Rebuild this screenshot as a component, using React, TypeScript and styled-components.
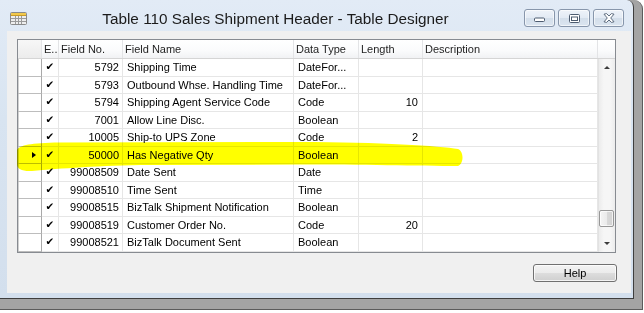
import React from "react";
import styled, { createGlobalStyle } from "styled-components";

const Global = createGlobalStyle`
  html, body { margin: 0; padding: 0; background: #ffffff; }
  body { font-family: "Liberation Sans", Arial, sans-serif; }
  * { box-sizing: border-box; }
`;

const Screen = styled.div`
  position: relative;
  width: 644px;
  height: 313px;
  overflow: hidden;
  background: #ffffff;
`;

const Shadow = styled.div`
  width: 643px;
  height: 310px;
  background: #a4a4a4;
  border-right: 1px solid #5c5c5c;
  border-bottom: 1px solid #5c5c5c;
  border-top-right-radius: 9px;
`;

const Window = styled.div`
  width: 634px;
  height: 299px;
  display: flex;
  flex-direction: column;
  background: linear-gradient(180deg, #e2ebf6 0%, #d8e4f1 40%, #d3dfed 100%);
  border-right: 1px solid #3e3e3e;
  border-bottom: 1px solid #3e3e3e;
  border-top-right-radius: 7px;
`;

const TitleBar = styled.div`
  height: 31px;
  display: flex;
  align-items: flex-start;
  padding: 0 9px 0 10px;
`;

const AppIcon = styled.svg`
  margin-top: 12px;
  flex: none;
`;

const Title = styled.div`
  flex: 1;
  text-align: center;
  font-size: 15.3px;
  line-height: 18px;
  padding-top: 10px;
  color: #1b1b1b;
  white-space: nowrap;
`;

const Caption = styled.div`
  display: flex;
  gap: 3px;
  margin-top: 9px;
`;

const CaptionButton = styled.div<{ $w: number }>`
  width: ${(p) => p.$w}px;
  height: 18px;
  border: 1px solid #8796ab;
  border-radius: 3px;
  background: linear-gradient(180deg, #eef3f9 0%, #e2eaf4 50%, #d3deea 51%, #dbe5f0 100%);
  box-shadow: inset 0 0 0 1px rgba(255, 255, 255, 0.6);
  display: flex;
  align-items: center;
  justify-content: center;
`;

const Client = styled.div`
  margin-left: 7px;
  width: 624px;
  height: 262px;
  background: #f0f0f0;
  display: flex;
  flex-direction: column;
  padding: 8px 0 0 10px;
`;

const GridBox = styled.div`
  width: 599px;
  height: 213.5px;
  border: 1px solid #878b91;
  background: #ffffff;
  display: flex;
`;

const TableArea = styled.div`
  width: 580px;
  display: flex;
  flex-direction: column;
`;

const COLS = "24px 17px 64px 171px 65px 64px 175px";

const HeaderRow = styled.div`
  display: grid;
  grid-template-columns: ${COLS};
  height: 19px;
  background: linear-gradient(180deg, #ffffff 0%, #fafbfc 60%, #f1f2f4 100%);
  border-bottom: 1px solid #d5d5d5;
`;

const HeadCell = styled.div<{ $sel?: boolean }>`
  font-size: 11px;
  line-height: 19px;
  color: #1e1e1e;
  padding-left: 2px;
  border-right: 1px solid #e3e4e6;
  white-space: nowrap;
  overflow: hidden;
  background: ${(p) => (p.$sel ? "linear-gradient(180deg,#f7f7f7,#ececec)" : "transparent")};
`;

const Row = styled.div`
  display: grid;
  grid-template-columns: ${COLS};
  height: 17.5px;
`;

const SelCell = styled.div`
  border-right: 1px solid #a9a9a9;
  border-bottom: 1px solid #bdbdbd;
  box-shadow: inset 1px 0 0 #d0d0d0;
  background: #ffffff;
  display: flex;
  align-items: center;
  padding-left: 14px;
`;

const Pointer = styled.div`
  width: 0;
  height: 0;
  border-top: 3.5px solid transparent;
  border-bottom: 3.5px solid transparent;
  border-left: 4px solid #000000;
`;

const Cell = styled.div<{ $align?: "left" | "right" | "center"; $pad?: number }>`
  font-size: 11px;
  line-height: 17px;
  color: #000000;
  border-right: 1px solid #e6e6e6;
  border-bottom: 1px solid #e6e6e6;
  text-align: ${(p) => p.$align || "left"};
  padding: ${(p) => (p.$align === "right" ? `0 ${p.$pad ?? 3}px 0 0` : `0 0 0 ${p.$pad ?? 4}px`)};
  white-space: nowrap;
  overflow: hidden;
`;

const Check = styled(Cell)`
  font-family: "DejaVu Sans", sans-serif;
  font-size: 10.5px;
  line-height: 15px;
  padding: 0;
`;

const ScrollCol = styled.div`
  flex: 1;
  display: flex;
  flex-direction: column;
`;

const ScrollHead = styled.div`
  height: 19px;
  background: linear-gradient(180deg, #ffffff 0%, #fafbfc 60%, #f1f2f4 100%);
  border-bottom: 1px solid #d5d5d5;
`;

const Track = styled.div`
  flex: 1;
  display: flex;
  flex-direction: column;
  background: linear-gradient(90deg, #ececec 0%, #f6f6f6 30%, #f6f6f6 70%, #ececec 100%);
  border-left: 1px solid #e2e2e2;
`;

const ArrowBtn = styled.div`
  height: 17px;
  display: flex;
  align-items: center;
  justify-content: center;
`;

const Arrow = styled.div<{ $down?: boolean }>`
  width: 0;
  height: 0;
  border-left: 3.5px solid transparent;
  border-right: 3.5px solid transparent;
  ${(p) => (p.$down ? "border-top: 3.5px solid #3c3c3c;" : "border-bottom: 3.5px solid #3c3c3c;")}
`;

const Spacer = styled.div`
  flex: 1;
`;

const Thumb = styled.div`
  height: 17px;
  margin: 0 1px 7.5px 0;
  border: 1px solid #979797;
  border-radius: 2px;
  background: linear-gradient(90deg, #f4f4f4 0%, #ebebeb 50%, #d9d9d9 51%, #d2d2d2 100%);
  box-shadow: inset 0 0 0 1px rgba(255, 255, 255, 0.7);
`;

const Footer = styled.div`
  display: flex;
  justify-content: flex-end;
  padding: 11.5px 14px 0 0;
`;

const HelpButton = styled.div`
  width: 84px;
  height: 18px;
  border: 1px solid #707070;
  border-radius: 3px;
  background: linear-gradient(180deg, #f3f3f3 0%, #ebebeb 50%, #dddddd 51%, #cfcfcf 100%);
  box-shadow: inset 0 0 0 1px rgba(255, 255, 255, 0.75);
  font-size: 11px;
  line-height: 16px;
  text-align: center;
  color: #000000;
`;

const Highlight = styled.svg`
  position: absolute;
  left: 0;
  top: 0;
  pointer-events: none;
  mix-blend-mode: multiply;
`;

type Field = { no: string; name: string; type: string; len: string; current?: boolean };

const fields: Field[] = [
  { no: "5792", name: "Shipping Time", type: "DateFor...", len: "" },
  { no: "5793", name: "Outbound Whse. Handling Time", type: "DateFor...", len: "" },
  { no: "5794", name: "Shipping Agent Service Code", type: "Code", len: "10" },
  { no: "7001", name: "Allow Line Disc.", type: "Boolean", len: "" },
  { no: "10005", name: "Ship-to UPS Zone", type: "Code", len: "2" },
  { no: "50000", name: "Has Negative Qty", type: "Boolean", len: "", current: true },
  { no: "99008509", name: "Date Sent", type: "Date", len: "" },
  { no: "99008510", name: "Time Sent", type: "Time", len: "" },
  { no: "99008515", name: "BizTalk Shipment Notification", type: "Boolean", len: "" },
  { no: "99008519", name: "Customer Order No.", type: "Code", len: "20" },
  { no: "99008521", name: "BizTalk Document Sent", type: "Boolean", len: "" },
];

const TableIcon = () => (
  <AppIcon width="17" height="13" viewBox="0 0 17 13">
    <rect x="0.5" y="0.5" width="16" height="12" rx="1" fill="#eeeeee" stroke="#8a8a8a" />
    <rect x="1" y="1" width="15" height="2.5" fill="#f2c94c" />
    <line x1="1" y1="3.5" x2="16" y2="3.5" stroke="#c89b2a" />
    <g stroke="#9a9a9a" strokeWidth="1">
      <line x1="1" y1="6.5" x2="16" y2="6.5" />
      <line x1="1" y1="9.5" x2="16" y2="9.5" />
      <line x1="5.5" y1="4" x2="5.5" y2="12" />
      <line x1="8.5" y1="4" x2="8.5" y2="12" />
      <line x1="11.5" y1="4" x2="11.5" y2="12" />
    </g>
  </AppIcon>
);

export default function App() {
  return (
    <>
      <Global />
      <Screen>
        <Shadow>
          <Window>
            <TitleBar>
              <TableIcon />
              <Title>Table 110 Sales Shipment Header - Table Designer</Title>
              <Caption>
                <CaptionButton $w={31}>
                  <svg width="11" height="8" viewBox="0 0 11 8">
                    <rect x="0.5" y="4" width="10" height="3.5" rx="1" fill="#ffffff" stroke="#4d5c70" />
                  </svg>
                </CaptionButton>
                <CaptionButton $w={32}>
                  <svg width="11" height="9" viewBox="0 0 11 9">
                    <rect x="0.5" y="0.5" width="10" height="8" rx="1" fill="#ffffff" stroke="#4d5c70" />
                    <rect x="2.5" y="3" width="6" height="3.5" fill="#ffffff" stroke="#4d5c70" />
                  </svg>
                </CaptionButton>
                <CaptionButton $w={31}>
                  <svg width="12" height="10" viewBox="0 0 12 10">
                    <path
                      d="M1 1.2 L3.6 0.6 L6 3 L8.4 0.6 L11 1.2 L7.7 5 L11 8.8 L8.4 9.4 L6 7 L3.6 9.4 L1 8.8 L4.3 5 Z"
                      fill="#ffffff"
                      stroke="#4d5c70"
                      strokeWidth="0.9"
                      strokeLinejoin="round"
                    />
                  </svg>
                </CaptionButton>
              </Caption>
            </TitleBar>
            <Client>
              <GridBox>
                <TableArea>
                  <HeaderRow>
                    <HeadCell $sel />
                    <HeadCell>E..</HeadCell>
                    <HeadCell>Field No.</HeadCell>
                    <HeadCell>Field Name</HeadCell>
                    <HeadCell>Data Type</HeadCell>
                    <HeadCell>Length</HeadCell>
                    <HeadCell>Description</HeadCell>
                  </HeaderRow>
                  {fields.map((f) => (
                    <Row key={f.no}>
                      <SelCell>{f.current && <Pointer />}</SelCell>
                      <Check $align="center">✔</Check>
                      <Cell $align="right" $pad={3}>{f.no}</Cell>
                      <Cell $pad={4}>{f.name}</Cell>
                      <Cell $pad={4}>{f.type}</Cell>
                      <Cell $align="right" $pad={4}>{f.len}</Cell>
                      <Cell />
                    </Row>
                  ))}
                </TableArea>
                <ScrollCol>
                  <ScrollHead />
                  <Track>
                    <ArrowBtn>
                      <Arrow />
                    </ArrowBtn>
                    <Spacer />
                    <Thumb />
                    <ArrowBtn>
                      <Arrow $down />
                    </ArrowBtn>
                  </Track>
                </ScrollCol>
              </GridBox>
              <Footer>
                <HelpButton>Help</HelpButton>
              </Footer>
            </Client>
          </Window>
        </Shadow>
        <Highlight width="644" height="313" viewBox="0 0 644 313">
          <defs>
            <filter id="soft" x="-5%" y="-50%" width="110%" height="200%">
              <feGaussianBlur stdDeviation="0.7" />
            </filter>
          </defs>
          <path
            d="M17 150 C20 145 30 143 60 142.5 L300 142 C380 142 440 146 458 149 C464 151 464 164 458 166 C420 166 360 164.5 300 164.5 L150 165 C100 165.5 60 168.5 32 171 C22 171.5 17 169 17 164 Z"
            fill="#ffff00"
            filter="url(#soft)"
          />
        </Highlight>
      </Screen>
    </>
  );
}
